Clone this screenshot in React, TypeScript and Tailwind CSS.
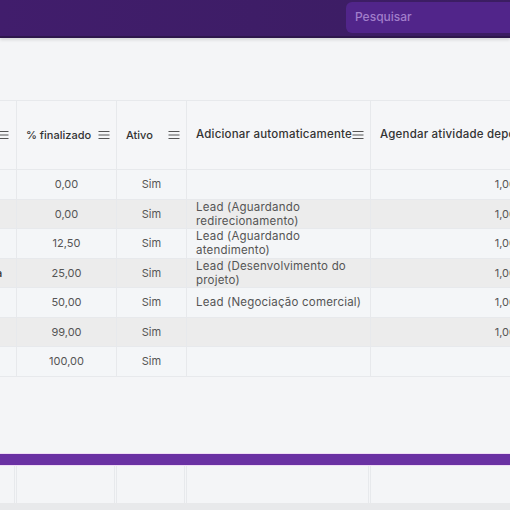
import React from "react";

const MenuIcon = () => (
  <svg width="12" height="10" viewBox="0 0 12 10" className="shrink-0">
    <path d="M0.5 1.5H11.5M0.5 5H11.5M0.5 8.5H11.5" stroke="#555" strokeWidth="1.2" />
  </svg>
);

const rows = [
  { pct: "0,00", auto: [] as string[], ag: "1,00", frag: "" },
  { pct: "0,00", auto: ["Lead (Aguardando", "redirecionamento)"], ag: "1,00", frag: "" },
  { pct: "12,50", auto: ["Lead (Aguardando", "atendimento)"], ag: "1,00", frag: "" },
  { pct: "25,00", auto: ["Lead (Desenvolvimento do", "projeto)"], ag: "1,00", frag: "a" },
  { pct: "50,00", auto: ["Lead (Negociação comercial)"], ag: "1,00", frag: "" },
  { pct: "99,00", auto: [], ag: "1,00", frag: "" },
  { pct: "100,00", auto: [], ag: "", frag: "" },
];

const cols = "grid grid-cols-[17px_100px_70px_184px_160px]";

export default function App() {
  return (
    <div
      className="w-[510px] h-[510px] overflow-hidden bg-[#f4f5f7] flex flex-col relative"
      style={{ fontFamily: "Inter, 'Noto Sans', sans-serif" }}
    >
      {/* top bar */}
      <div className="h-[38px] shrink-0 bg-gradient-to-r from-[#411d6c] to-[#3b1d62] border-b-2 border-[#2e174c] flex items-start justify-end shadow-[0_2px_3px_rgba(0,0,0,0.12)] relative z-10">
        <div className="w-[170px] h-[31px] mt-[2px] mr-[-6px] rounded-[6px] bg-[#51258a] flex items-start pt-[6px] pl-[9px] text-[12px] font-medium text-[#a17ecb]">
          Pesquisar
        </div>
      </div>

      <div className="h-[62px] shrink-0" />

      {/* table */}
      <div className="w-[531px] border-t border-[#e7e9ec]">
        <div className={`${cols} h-[69px] bg-[#f5f6f8] text-[11px] font-medium text-[#333] border-b border-[#e7e9ec]`}>
          <div className="flex items-center justify-end pr-[7px] border-r border-[#e7e9ec] overflow-hidden">
            <MenuIcon />
          </div>
          <div className="flex items-center justify-between pl-[9px] pr-[6px] border-r border-[#e7e9ec]">
            <span>% finalizado</span>
            <MenuIcon />
          </div>
          <div className="flex items-center justify-between pl-[9px] pr-[6px] border-r border-[#e7e9ec]">
            <span>Ativo</span>
            <MenuIcon />
          </div>
          <div className="flex items-center justify-between pl-[9px] pr-[6px] border-r border-[#e7e9ec]">
            <span className="whitespace-nowrap text-[11.5px] tracking-[0.2px]">Adicionar automaticamente</span>
            <MenuIcon />
          </div>
          <div className="flex items-center pl-[9px] whitespace-nowrap text-[11.5px] tracking-[0.2px]">
            Agendar atividade depois
          </div>
        </div>

        {rows.map((r, i) => (
          <div
            key={i}
            className={`${cols} h-[29.5px] text-[11px] text-[#555] border-b border-[#e7e9ec] ${
              i % 2 === 0 ? "bg-[#f4f6f8]" : "bg-[#ececec]"
            }`}
          >
            <div className="flex items-center justify-start border-r border-[#e7e9ec] overflow-hidden text-[#333]">
              <span className="ml-[-4px] font-medium">{r.frag}</span>
            </div>
            <div className="flex items-center justify-center border-r border-[#e7e9ec]">{r.pct}</div>
            <div className="flex items-center justify-center border-r border-[#e7e9ec]">Sim</div>
            <div className="flex flex-col justify-center pl-[9px] leading-[14px] text-[11.5px] tracking-[0.2px] border-r border-[#e7e9ec]">
              {r.auto.map((t, j) => (
                <span key={j} className="whitespace-nowrap">
                  {t}
                </span>
              ))}
            </div>
            <div className="flex items-center justify-end pr-[15px]">{r.ag}</div>
          </div>
        ))}
      </div>

      <div className="flex-1" />

      {/* purple bar */}
      <div className="h-[13px] shrink-0 bg-[#6a31a3] border-y border-[#f0dcf5]" />

      {/* lower rows */}
      <div className={`${cols} w-[531px] h-[37px] shrink-0 bg-[#f4f5f7]`}>
        <div className="border-r-[3px] border-double border-[#e7e9ec]" />
        <div className="border-r-[3px] border-double border-[#e7e9ec]" />
        <div className="border-r-[3px] border-double border-[#e7e9ec]" />
        <div className="border-r-[3px] border-double border-[#e7e9ec]" />
        <div />
      </div>
      <div className="h-[7px] shrink-0 bg-[#e8e9eb]" />
    </div>
  );
}
